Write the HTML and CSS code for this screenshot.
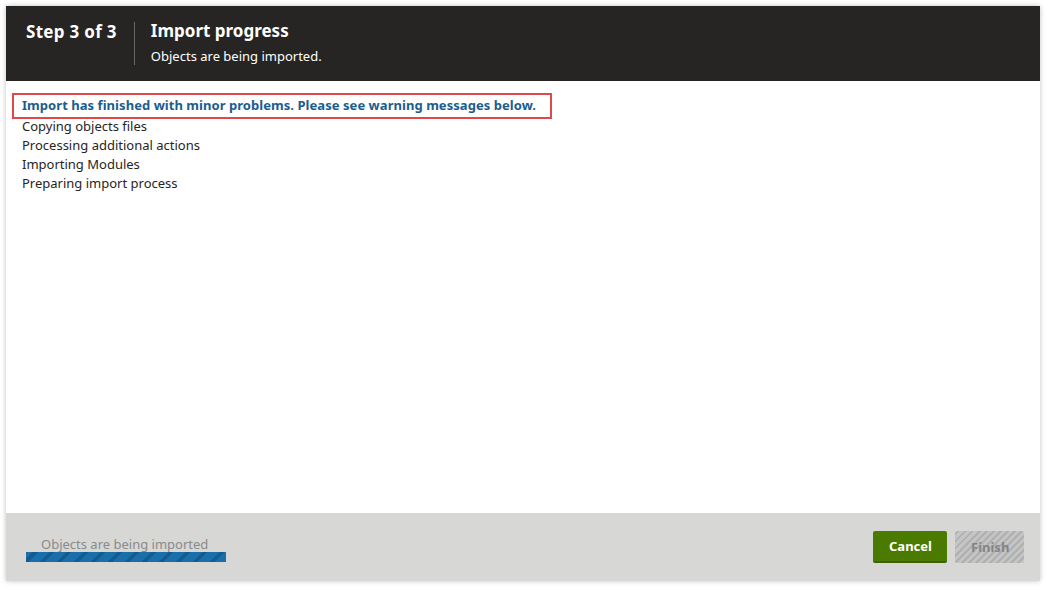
FILE: index.html
```html
<!DOCTYPE html>
<html>
<head>
  <meta charset="UTF-8">
  <title>Import progress</title>
  <link rel="stylesheet" href="styles.css">
</head>
<body>
  <div class="dialog">
    <div class="dialog-header">
      <div class="step">Step 3 of 3</div>
      <div class="step-info">
        <h1>Import progress</h1>
        <div class="step-desc">Objects are being imported.</div>
      </div>
    </div>

    <div class="dialog-body">
      <div class="warning">Import has finished with minor problems. Please see warning messages below.</div>
      <div class="log">
        <div class="log-line">Copying objects files</div>
        <div class="log-line">Processing additional actions</div>
        <div class="log-line">Importing Modules</div>
        <div class="log-line">Preparing import process</div>
      </div>
    </div>

    <div class="dialog-footer">
      <div class="progress">
        <div class="progress-label">Objects are being imported</div>
        <div class="progress-bar"></div>
      </div>
      <div class="buttons">
        <button class="btn btn-primary">Cancel</button>
        <button class="btn btn-disabled" disabled>Finish</button>
      </div>
    </div>
  </div>
</body>
</html>
```

FILE: styles.css
```css
body {
  margin: 0;
  padding: 6px 8px 9px 6px;
  background-color: #ffffff;
  font-family: "Noto Sans", "Open Sans", Arial, sans-serif;
  font-size: 13px;
  color: #262524;
}

.dialog {
  display: flex;
  flex-direction: column;
  height: 575px;
  box-shadow: 0 0 5px rgba(0, 0, 0, 0.25);
}

.dialog-header {
  display: flex;
  height: 75px;
  background-color: #262524;
  color: #ffffff;
  box-sizing: border-box;
  padding: 15px 0 0 20px;
}

.step {
  font-size: 17px;
  font-weight: bold;
  line-height: 20px;
  letter-spacing: 0.3px;
  padding-right: 17px;
  border-right: 1px solid #666666;
  height: 43px;
  margin-top: 1px;
}

.step-info {
  padding-left: 16px;
}

h1 {
  margin: 0;
  font-size: 17px;
  font-weight: bold;
  line-height: 20px;
}

.step-desc {
  margin-top: 7px;
  font-size: 13px;
  line-height: 16px;
}

.dialog-body {
  flex: 1;
  background-color: #ffffff;
  padding: 12px 6px 0 6px;
}

.warning {
  display: inline-block;
  border: 2px solid #e0494a;
  padding: 2px 14px 3px 8px;
  color: #1a5d8f;
  font-weight: bold;
  line-height: 17px;
  letter-spacing: 0.05px;
}

.log {
  margin-top: -2px;
}

.log-line {
  padding-left: 10px;
  line-height: 19px;
}

.dialog-footer {
  display: flex;
  justify-content: space-between;
  align-items: center;
  height: 68px;
  background-color: #d7d8d6;
  padding: 0 16px 0 20px;
}

.progress {
  width: 200px;
  margin-top: 4px;
}

.progress-label {
  color: #8a8a8a;
  padding-left: 15px;
  line-height: 16px;
}

.progress-bar {
  height: 10px;
  background-color: #1a6fab;
  background-image: repeating-linear-gradient(-45deg, #1a6fab 0, #1a6fab 8px, #135c8f 8px, #135c8f 12px);
}

.buttons {
  display: flex;
  gap: 8px;
  margin-bottom: 0;
}

.btn {
  height: 32px;
  border: none;
  border-radius: 2px;
  font-family: inherit;
  font-size: 13px;
  font-weight: bold;
  padding: 0 16px;
}

.btn-primary {
  width: 74px;
  background-color: #4a7a00;
  border-bottom: 2px solid #3b6300;
  color: #ffffff;
}

.btn-disabled {
  width: 69px;
  color: #858585;
  background-color: #c4c4c4;
  background-image: repeating-linear-gradient(-45deg, #c4c4c4 0, #c4c4c4 3px, #b0b0b0 3px, #b0b0b0 5px);
}
```
